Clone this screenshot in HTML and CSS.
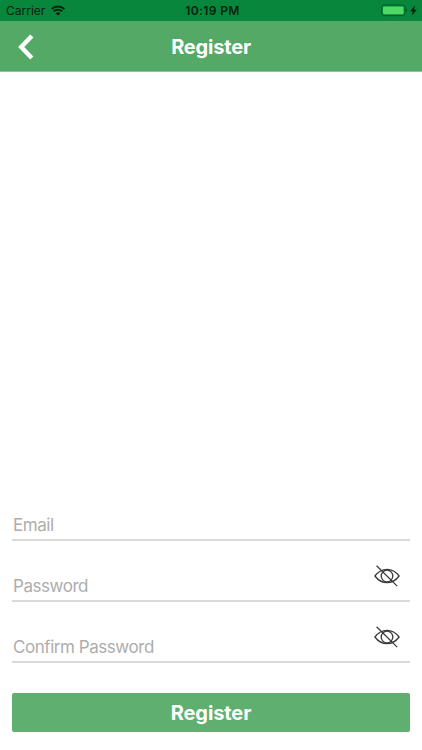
FILE: index.html
```html
<!DOCTYPE html>
<html lang="en">
<head>
    <meta charset="UTF-8">
    <meta name="viewport" content="width=device-width, initial-scale=1.0">
    <title>Register</title>
    <link rel="stylesheet" href="styles.css">
</head>
<body>
    <div class="status-bar">
        <div class="carrier">
            <span>Carrier</span>
            <svg class="wifi" viewBox="0 0 14 11" width="14" height="11">
                <path d="M0.7 4a8.9 8.9 0 0 1 12.6 0M2.8 6.4a5.9 5.9 0 0 1 8.4 0" fill="none" stroke="#03210f" stroke-width="2"/>
                <path d="M7 10.6L4.6 8.4a3.3 3.3 0 0 1 4.8 0z" fill="#03210f"/>
            </svg>
        </div>
        <span class="time">10:19 PM</span>
        <div class="battery">
            <svg viewBox="0 0 36 13" width="36" height="13">
                <rect x="0.6" y="1" width="23.4" height="10.6" rx="2.6" fill="none" stroke="#04592a" stroke-width="1"/>
                <rect x="2" y="2.5" width="20.6" height="7.7" rx="1.2" fill="#4cd964"/>
                <path d="M25.2 4.6c1.4 0.5 1.4 3 0 3.5z" fill="#04592a"/>
                <path d="M34 1.4L29.2 7.2h2.6l-1 4.4L35.8 5.8h-2.7z" fill="#03210f"/>
            </svg>
        </div>
    </div>

    <div class="navbar">
        <a class="back" href="#" aria-label="Back">
            <svg viewBox="0 0 16 26" width="16" height="26">
                <path d="M13.8 1.9L3.2 13l10.6 11.1" fill="none" stroke="#fff" stroke-width="4.4"/>
            </svg>
        </a>
        <h1>Register</h1>
    </div>

    <form class="register-form">
        <div class="field">
            <input type="email" placeholder="Email">
        </div>
        <div class="field">
            <input type="password" placeholder="Password">
            <svg class="eye" viewBox="0 0 26 22" width="26" height="22">
                <path d="M0.9 11C4.2 6.6 8.2 4.3 13 4.3S21.8 6.6 25.1 11C21.8 15.4 17.8 17.7 13 17.7S4.2 15.4 0.9 11z"/>
                <circle cx="13" cy="11" r="5.8"/>
                <path d="M2.6 0.7L23.2 21.1"/>
            </svg>
        </div>
        <div class="field">
            <input type="password" placeholder="Confirm Password">
            <svg class="eye" viewBox="0 0 26 22" width="26" height="22">
                <path d="M0.9 11C4.2 6.6 8.2 4.3 13 4.3S21.8 6.6 25.1 11C21.8 15.4 17.8 17.7 13 17.7S4.2 15.4 0.9 11z"/>
                <circle cx="13" cy="11" r="5.8"/>
                <path d="M2.6 0.7L23.2 21.1"/>
            </svg>
        </div>
        <button type="button" class="btn-register">Register</button>
    </form>
</body>
</html>
```
FILE: styles.css
```css
* {
    box-sizing: border-box;
}

body {
    margin: 0;
    height: 750px;
    display: flex;
    flex-direction: column;
    background: #fff;
    font-family: 'Inter', sans-serif;
}

/* Status bar */
.status-bar {
    height: 21px;
    padding: 0 5px 0 6px;
    display: grid;
    grid-template-columns: 1fr auto 1fr;
    align-items: center;
    background: #08873c;
    color: #03210f;
    font-size: 12px;
}

.carrier {
    display: flex;
    align-items: center;
    gap: 6px;
}

.time {
    padding-left: 2px;
    font-weight: 600;
    letter-spacing: 0.4px;
}

.battery {
    display: flex;
    justify-content: flex-end;
}

/* Header */
.navbar {
    height: 51px;
    padding: 1px 18px 0;
    display: grid;
    grid-template-columns: 1fr auto 1fr;
    align-items: center;
    background: #55a967;
    border-bottom: 1px solid #8dc69a;
}

.back {
    display: flex;
}

h1 {
    margin: 0;
    color: #fff;
    font-size: 20px;
    font-weight: 700;
    letter-spacing: -0.2px;
}

/* Form sits at the bottom of the screen */
.register-form {
    margin-top: auto;
    padding: 0 12px 18px;
}

.field {
    height: 61px;
    padding-bottom: 1px;
    display: flex;
    align-items: flex-end;
    border-bottom: 2px solid #d9d9d9;
}

.field input {
    flex: 1;
    min-width: 0;
    height: 26px;
    padding: 0 0 0 1px;
    border: none;
    outline: none;
    background: none;
    font-family: inherit;
    font-size: 17px;
    letter-spacing: -0.45px;
}

.field input::placeholder {
    color: #adadad;
    opacity: 1;
}

.eye {
    margin: 0 10px 12px 0;
    fill: none;
    stroke: #3c3c3c;
    stroke-width: 1.3;
}

.btn-register {
    display: block;
    width: 100%;
    height: 39px;
    margin-top: 30px;
    border: none;
    border-radius: 2px;
    background: #5faf70;
    color: #fff;
    font-family: inherit;
    font-size: 20px;
    font-weight: 700;
    letter-spacing: -0.1px;
}
```
